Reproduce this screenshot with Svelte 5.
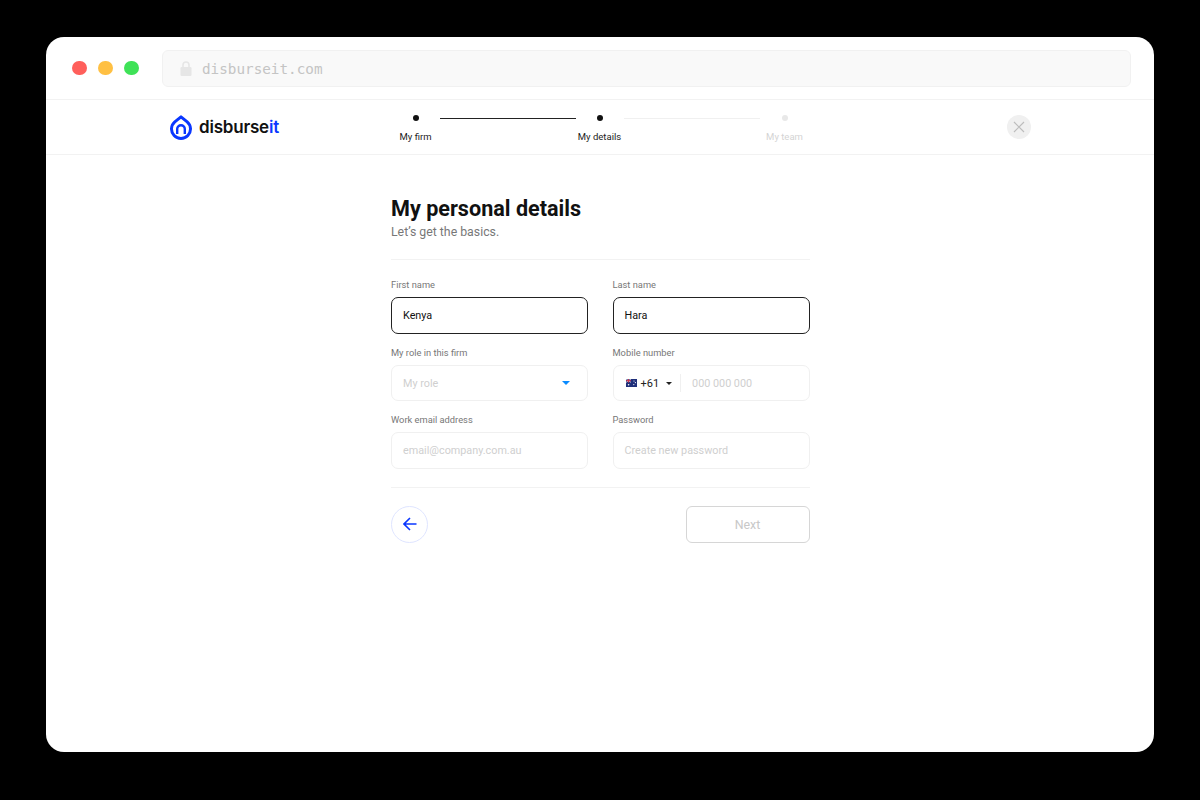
<script>
	const steps = [
		{ label: 'My firm', active: true },
		{ label: 'My details', active: true },
		{ label: 'My team', active: false }
	];
</script>

<main class="window">
	<div class="chrome">
		<div class="lights">
			<span class="light red"></span>
			<span class="light yellow"></span>
			<span class="light green"></span>
		</div>
		<div class="urlbar">
			<svg class="lock" width="12" height="15" viewBox="0 0 12 15">
				<path d="M3 7V4a3 3 0 0 1 6 0V7" fill="none" stroke="#e6e6e6" stroke-width="1.6" />
				<rect x="0.5" y="6" width="11" height="9" rx="1.2" fill="#e6e6e6" />
			</svg>
			<span class="url">disburseit.com</span>
		</div>
	</div>

	<header class="topbar">
		<div class="logo">
			<svg width="24" height="25" viewBox="0 0 24 25">
				<path d="M12 1.8 L18.2 6.8 A9.5 9.5 0 1 1 5.8 6.8 Z" fill="none" stroke="#0a37ff" stroke-width="3" stroke-linejoin="round" />
				<path d="M8.2 19 V14 a3.8 3.8 0 0 1 7.6 0 V19" fill="none" stroke="#0a37ff" stroke-width="2.4" />
			</svg>
			<span class="wordmark">disburse<span class="it">it</span></span>
		</div>

		<ol class="stepper">
			{#each steps as step, i}
				{#if i > 0}
					<li class="line" class:on={step.active}></li>
				{/if}
				<li class="step" class:on={step.active}>
					<span class="dot"></span>
					<span class="step-label">{step.label}</span>
				</li>
			{/each}
		</ol>

		<button class="close" aria-label="Close">
			<svg width="12" height="12" viewBox="0 0 12 12">
				<path d="M1 1 11 11M11 1 1 11" stroke="#bdbdbd" stroke-width="1.2" fill="none" />
			</svg>
		</button>
	</header>

	<section class="form">
		<h1>My personal details</h1>
		<p class="sub">Let’s get the basics.</p>
		<hr />

		<div class="fields">
			<div class="field">
				<span class="label">First name</span>
				<div class="input filled">Kenya</div>
			</div>
			<div class="field">
				<span class="label">Last name</span>
				<div class="input filled">Hara</div>
			</div>
			<div class="field">
				<span class="label">My role in this firm</span>
				<div class="input select">
					<span>My role</span>
					<span class="caret blue"></span>
				</div>
			</div>
			<div class="field">
				<span class="label">Mobile number</span>
				<div class="input phone">
					<svg class="flag" width="11" height="8" viewBox="0 0 11 8">
						<rect width="11" height="8" fill="#1f2f7a" />
						<path d="M0 0 5 3.4M5 0 0 3.4" stroke="#e8e8f0" stroke-width="0.8" />
						<path d="M2.5 0V3.6M0 1.7H5" stroke="#d8304a" stroke-width="0.9" />
						<circle cx="8" cy="2" r="0.6" fill="#fff" />
						<circle cx="9.4" cy="3.6" r="0.6" fill="#fff" />
						<circle cx="7.8" cy="5.6" r="0.6" fill="#fff" />
						<circle cx="2.6" cy="5.8" r="0.8" fill="#fff" />
					</svg>
					<span class="code">+61</span>
					<span class="caret dark"></span>
					<span class="divider"></span>
					<span>000 000 000</span>
				</div>
			</div>
			<div class="field">
				<span class="label">Work email address</span>
				<div class="input">email@company.com.au</div>
			</div>
			<div class="field">
				<span class="label">Password</span>
				<div class="input">Create new password</div>
			</div>
		</div>

		<hr class="bottom" />

		<div class="actions">
			<button class="back" aria-label="Back">
				<svg width="14" height="14" viewBox="0 0 14 14">
					<path d="M13.5 7H1M7 1 1 7l6 6" fill="none" stroke="#0a37ff" stroke-width="1.6" />
				</svg>
			</button>
			<button class="next">Next</button>
		</div>
	</section>
</main>

<style>
	:global(body) {
		background: #000;
		font-family: Roboto, "Liberation Sans", sans-serif;
	}

	.window {
		width: 1108px;
		height: 715px;
		margin: 37px auto 48px;
		background: #fff;
		border-radius: 18px;
		overflow: hidden;
	}

	.chrome {
		height: 62px;
		display: flex;
		align-items: center;
		gap: 23.5px;
		padding: 0 23px 0 26px;
		border-bottom: 1px solid #f2f2f2;
	}

	.lights {
		display: flex;
		gap: 11.5px;
	}

	.light {
		width: 14.5px;
		height: 14.5px;
		border-radius: 50%;
	}

	.red { background: #ff5f5b; }
	.yellow { background: #ffc043; }
	.green { background: #3fe257; }

	.urlbar {
		flex: 1;
		height: 37px;
		box-sizing: border-box;
		display: flex;
		align-items: center;
		gap: 10px;
		padding: 1px 0 0 17px;
		background: #f9f9f9;
		border: 1px solid #f1f1f1;
		border-radius: 6px;
	}

	.url {
		font-family: "DejaVu Sans Mono", "Liberation Mono", monospace;
		font-size: 14.3px;
		color: #c4c4c4;
	}

	.topbar {
		height: 54px;
		display: grid;
		grid-template-columns: 1fr auto 1fr;
		align-items: center;
		padding: 0 123px 0 124px;
		border-bottom: 1px solid #f2f2f2;
	}

	.logo {
		display: flex;
		align-items: center;
		gap: 6px;
		margin-left: -1px;
	}

	.wordmark {
		font-family: Inter, sans-serif;
		font-weight: 600;
		font-size: 17px;
		letter-spacing: -0.2px;
		color: #111;
	}

	.it { color: #0a37ff; }

	.stepper {
		list-style: none;
		margin: 0 0 0 -1px;
		padding: 0;
		display: flex;
		align-self: start;
	}

	.step {
		width: 48px;
		display: flex;
		flex-direction: column;
		align-items: center;
		padding-top: 15px;
		gap: 10px;
		font-size: 9.5px;
		color: #d4d4d4;
	}

	.step:last-child { margin-left: 1px; }

	.step.on { color: #1c1c1c; }

	.dot {
		width: 6px;
		height: 6px;
		border-radius: 50%;
		background: #e8e8e8;
	}

	.step.on .dot { background: #111; }

	.step-label {
		line-height: 12px;
		white-space: nowrap;
	}

	.line {
		width: 136px;
		height: 1px;
		margin-top: 18px;
		background: #f0f0f0;
	}

	.line.on { background: #222; }

	.close {
		justify-self: end;
		width: 24px;
		height: 24px;
		padding: 0;
		border: none;
		border-radius: 50%;
		background: #f0f0f0;
		display: flex;
		align-items: center;
		justify-content: center;
	}

	.form {
		width: 418.5px;
		margin: 0 0 0 345px;
		padding-top: 41px;
	}

	h1 {
		margin: 0;
		font-size: 21.6px;
		line-height: 26px;
		font-weight: 700;
		color: #111;
	}

	.sub {
		margin: 1px 0 0;
		font-size: 12.3px;
		line-height: 18px;
		color: #777;
	}

	hr {
		margin: 18px 0 0;
		border: none;
		border-top: 1px solid #f2f2f2;
	}

	.fields {
		margin-top: 19px;
		display: grid;
		grid-template-columns: 197px 197px;
		justify-content: space-between;
		row-gap: 13px;
	}

	.field {
		display: flex;
		flex-direction: column;
		gap: 6px;
	}

	.label {
		font-size: 9.3px;
		line-height: 12px;
		color: #777;
	}

	.input {
		height: 36.5px;
		box-sizing: border-box;
		display: flex;
		align-items: center;
		padding: 1px 11px 0;
		border: 1px solid #f0f0f0;
		border-radius: 7px;
		font-size: 10.8px;
		color: #cfcfcf;
	}

	.input.filled {
		padding-top: 0;
		border: 1px solid #222;
		color: #111;
	}

	.select {
		justify-content: space-between;
		padding-right: 17px;
	}

	.caret {
		width: 0;
		height: 0;
		border-left: 4px solid transparent;
		border-right: 4px solid transparent;
		border-top: 4px solid #0a8bff;
	}

	.caret.dark {
		border-left-width: 3px;
		border-right-width: 3px;
		border-top: 3px solid #222;
		margin-left: 7px;
	}

	.flag {
		margin: 0 4px 0 1px;
	}

	.code {
		color: #222;
		font-size: 11px;
	}

	.divider {
		width: 1px;
		height: 18px;
		background: #f0f0f0;
		margin: 0 11px 0 8px;
	}

	.bottom { margin-top: 18px; }

	.actions {
		margin-top: 18px;
		display: flex;
		justify-content: space-between;
		align-items: center;
	}

	.back {
		width: 37px;
		height: 37px;
		padding: 0;
		border-radius: 50%;
		border: 1px solid #dfe5ff;
		background: #fff;
		display: flex;
		align-items: center;
		justify-content: center;
	}

	.next {
		width: 124px;
		height: 37px;
		border: 1px solid #d6d6d6;
		border-radius: 6px;
		background: #fff;
		font-family: inherit;
		font-size: 12.4px;
		color: #c8c8c8;
	}
</style>
